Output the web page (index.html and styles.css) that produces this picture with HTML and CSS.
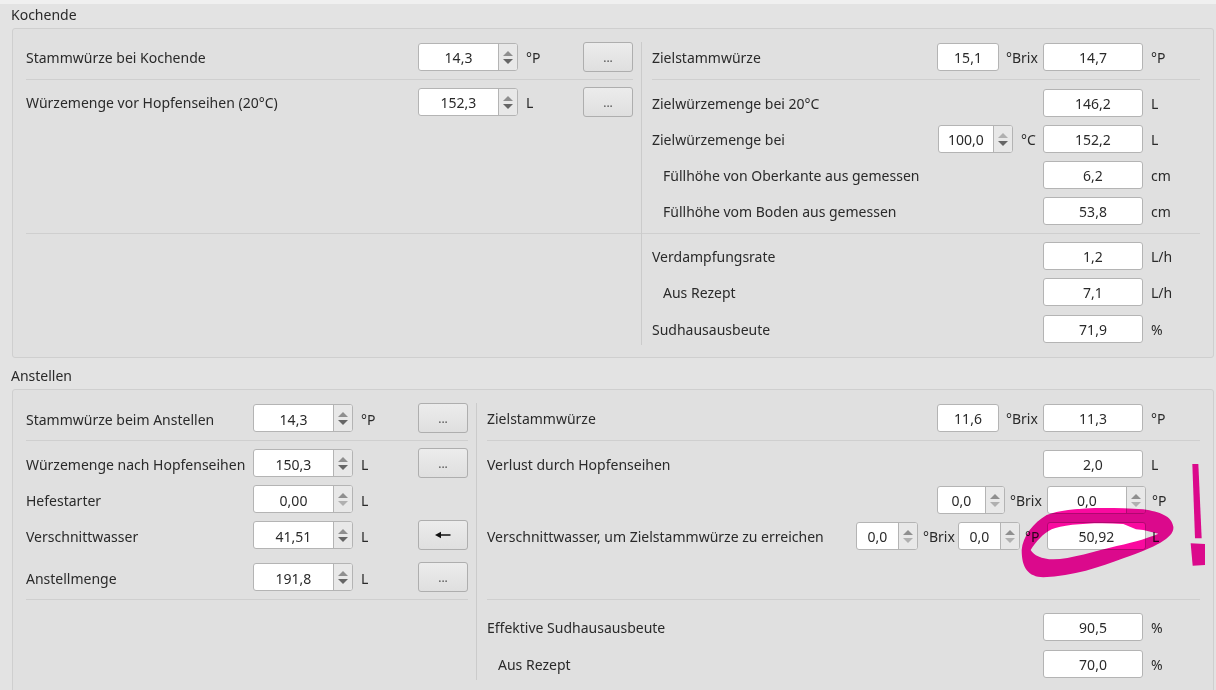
FILE: index.html
```html
<!DOCTYPE html>
<html lang="de">
<head>
<meta charset="utf-8">
<title>Kochende und Anstellen</title>
<link rel="stylesheet" href="styles.css">
</head>
<body>
<div class="topstrip"></div>
<h2 class="title t-koch">Kochende</h2>
<section class="panel koch">
  <div class="col lc1">
    <div class="row"><span class="label lw1">Stammwürze bei Kochende</span><div class="spin w100"><span class="val">14,3</span><span class="arrows"><i class="up"></i><i class="dn"></i></span></div><span class="unit u65">°P</span><button class="btn">...</button></div>
    <div class="hr h-a"></div>
    <div class="row"><span class="label lw1">Würzemenge vor Hopfenseihen (20°C)</span><div class="spin w100"><span class="val">152,3</span><span class="arrows"><i class="up"></i><i class="dn"></i></span></div><span class="unit u65">L</span><button class="btn">...</button></div>
    <div class="hr h-far"></div>
  </div>
  <div class="vline"></div>
  <div class="col rc1">
    <div class="row"><span class="label grow">Zielstammwürze</span><div class="field w62">15,1</div><span class="unit u44">°Brix</span><div class="field w100">14,7</div><span class="unit u57">°P</span></div>
    <div class="hr h-r"></div>
    <div class="row"><span class="label grow">Zielwürzemenge bei 20°C</span><div class="field w100">146,2</div><span class="unit u57">L</span></div>
    <div class="row gap"><span class="label grow">Zielwürzemenge bei</span><div class="spin w75"><span class="val">100,0</span><span class="arrows"><i class="up off"></i><i class="dn"></i></span></div><span class="unit u30">°C</span><div class="field w100">152,2</div><span class="unit u57">L</span></div>
    <div class="row gap"><span class="label grow ind">Füllhöhe von Oberkante aus gemessen</span><div class="field w100">6,2</div><span class="unit u57">cm</span></div>
    <div class="row gap"><span class="label grow ind">Füllhöhe vom Boden aus gemessen</span><div class="field w100">53,8</div><span class="unit u57">cm</span></div>
    <div class="hr h-b"></div>
    <div class="row"><span class="label grow">Verdampfungsrate</span><div class="field w100">1,2</div><span class="unit u57">L/h</span></div>
    <div class="row gap"><span class="label grow ind">Aus Rezept</span><div class="field w100">7,1</div><span class="unit u57">L/h</span></div>
    <div class="row gap1"><span class="label grow">Sudhausausbeute</span><div class="field w100">71,9</div><span class="unit u57">%</span></div>
  </div>
</section>

<h2 class="title t-anst">Anstellen</h2>
<section class="panel anst">
  <div class="col lc2">
    <div class="row"><span class="label lw2">Stammwürze beim Anstellen</span><div class="spin w100"><span class="val">14,3</span><span class="arrows"><i class="up"></i><i class="dn"></i></span></div><span class="unit u65">°P</span><button class="btn">...</button></div>
    <div class="hr h-a"></div>
    <div class="row"><span class="label lw2">Würzemenge nach Hopfenseihen</span><div class="spin w100"><span class="val">150,3</span><span class="arrows"><i class="up"></i><i class="dn"></i></span></div><span class="unit u65">L</span><button class="btn">...</button></div>
    <div class="row gap"><span class="label lw2">Hefestarter</span><div class="spin w100"><span class="val">0,00</span><span class="arrows"><i class="up"></i><i class="dn off"></i></span></div><span class="unit u65">L</span></div>
    <div class="row gap"><span class="label lw2">Verschnittwasser</span><div class="spin w100"><span class="val">41,51</span><span class="arrows"><i class="up"></i><i class="dn"></i></span></div><span class="unit u65">L</span><button class="btn"><svg class="arrow" width="16" height="8" viewBox="0 0 16 8"><path d="M0 4 L6 .8 V3.2 H15.5 V4.8 H6 V7.2 Z" fill="#111"/></svg></button></div>
    <div class="row gapl"><span class="label lw2">Anstellmenge</span><div class="spin w100"><span class="val">191,8</span><span class="arrows"><i class="up"></i><i class="dn"></i></span></div><span class="unit u65">L</span><button class="btn">...</button></div>
    <div class="hr h-c"></div>
  </div>
  <div class="vline"></div>
  <div class="col rc2">
    <div class="row"><span class="label grow">Zielstammwürze</span><div class="field w62">11,6</div><span class="unit u44">°Brix</span><div class="field w100">11,3</div><span class="unit u57">°P</span></div>
    <div class="hr h-r"></div>
    <div class="row"><span class="label grow">Verlust durch Hopfenseihen</span><div class="field w100">2,0</div><span class="unit u57">L</span></div>
    <div class="row gap"><span class="label grow"></span><div class="spin w68"><span class="val">0,0</span><span class="arrows"><i class="up"></i><i class="dn off"></i></span></div><span class="unit u41">°Brix</span><div class="spin w99"><span class="val">0,0</span><span class="arrows"><i class="up"></i><i class="dn off"></i></span></div><span class="unit u54">°P</span></div>
    <div class="row gap"><span class="label grow">Verschnittwasser, um Zielstammwürze zu erreichen</span><div class="spin w62"><span class="val">0,0</span><span class="arrows"><i class="up"></i><i class="dn off"></i></span></div><span class="unit u40">°Brix</span><div class="spin w62"><span class="val">0,0</span><span class="arrows"><i class="up"></i><i class="dn off"></i></span></div><span class="unit u26">°P</span><div class="field w99">50,92</div><span class="unit u54">L</span></div>
    <div class="hr h-d"></div>
    <div class="row"><span class="label grow">Effektive Sudhausausbeute</span><div class="field w100">90,5</div><span class="unit u57">%</span></div>
    <div class="row gap1"><span class="label grow ind">Aus Rezept</span><div class="field w100">70,0</div><span class="unit u57">%</span></div>
  </div>
</section>

<svg class="scribble" width="206" height="135" viewBox="0 -150 618 405" aria-hidden="true">
  <path fill-rule="evenodd" d="M35 150 C38 110 70 68 110 45 C170 22 280 20 400 28 C450 36 485 48 490 80 C494 112 440 140 340 175 C270 202 190 228 100 232 C55 230 35 205 35 150 Z M62 150 C78 125 100 100 125 88 C160 72 260 66 340 72 L378 88 L400 90 L445 101 C420 112 380 125 320 138 C260 152 180 178 130 178 C95 178 70 165 62 150 Z"/>
  <path d="M547 -108 L565 -108 L575 115 L555 115 Z"/>
  <path d="M542 130 L585 132 L585 195 L548 197 Z"/>
</svg>
</body>
</html>
```
FILE: styles.css
```css
* { box-sizing: border-box; }
html, body { margin: 0; height: 690px; overflow: hidden; }
body {
  position: relative;
  background: #e3e3e3;
  color: #2a2a2a;
  font-family: "Noto Sans", "Open Sans", sans-serif;
  font-size: 14px;
}
.topstrip { height: 4px; background: #f0f0f0; }
.title { margin: 0; padding-left: 11px; font-weight: 400; font-size: 14px; line-height: 20px; }
.t-koch { height: 24px; padding-top: 1px; }
.t-anst { height: 31px; padding-top: 8px; }
.panel {
  display: flex;
  margin: 0 2px 0 12px;
  border: 1px solid #cfcfcf;
  border-radius: 3px;
  background: #e0e0e0;
}
.koch { height: 330px; padding: 13px 0 0 13px; }
.anst { height: 320px; padding: 13px 0 0 13px; }
.col { display: flex; flex-direction: column; flex: none; }
.lc1 { width: 607px; }
.lc2 { width: 442px; }
.rc1 { width: 548px; }
.rc2 { width: 713px; }
.vline { flex: none; width: 1px; background: #cbcbcb; margin: 0 10px 0 8px; height: 303px; }
.anst .vline { height: 277px; }
.row { display: flex; align-items: center; height: 30px; flex: none; }
.gap { margin-top: 6px; }
.gap1 { margin-top: 7px; }
.gapl { margin-top: 12px; }
.label { white-space: nowrap; }
.grow { flex: 1; }
.ind { padding-left: 11px; }
.lw1 { width: 392px; }
.lw2 { width: 227px; padding-top: 2px; }
.lc2 .val, .lc2 .unit { padding-top: 2px; }
.hr { height: 1px; background: #cfcfcf; flex: none; }
.h-a { margin: 7px 0; }
.h-r { margin: 7px 0 8px; }
.h-b { margin: 7px 0; }
.h-c { margin: 7px 0 0; }
.h-d { margin: 48px 0 12px; }
.h-far { margin-top: 116px; width: 1174px; }
.field, .spin {
  height: 28px;
  background: #fff;
  border: 1px solid #b4b4b4;
  border-radius: 3px;
  flex: none;
}
.field { display: flex; align-items: center; justify-content: center; }
.spin { display: flex; }
.val { flex: 1; display: flex; align-items: center; justify-content: center; }
.arrows {
  width: 19px;
  display: flex;
  flex-direction: column;
  align-items: center;
  justify-content: center;
  gap: 3px;
  background: #e8e8e8;
  border-left: 1px solid #b4b4b4;
  border-radius: 0 2px 2px 0;
}
.up, .dn { display: block; width: 0; height: 0; border-left: 5px solid transparent; border-right: 5px solid transparent; }
.up { border-bottom: 5px solid #8f8f8f; }
.dn { border-top: 5px solid #666; }
.up.off { border-bottom-color: #b0b0b0; }
.dn.off { border-top-color: #b0b0b0; }
.w100 { width: 100px; }
.w99 { width: 99px; }
.w75 { width: 75px; }
.w68 { width: 68px; }
.w62 { width: 62px; }
.unit { flex: none; padding-left: 8px; white-space: nowrap; }
.u65 { width: 65px; }
.u57 { width: 57px; }
.u54 { width: 54px; padding-left: 6px; }
.u44 { width: 44px; padding-left: 7px; }
.u41 { width: 42px; padding-left: 5px; }
.u40 { width: 40px; padding-left: 5px; }
.u30 { width: 30px; }
.u26 { width: 27px; padding-left: 5px; }
.btn {
  width: 50px;
  height: 30px;
  padding: 0;
  flex: none;
  font: inherit;
  font-size: 12px;
  color: #555;
  background: linear-gradient(#ececec, #dfdfdf);
  border: 1px solid #aeaeae;
  border-radius: 3px;
}
.arrow { display: block; margin: 0 auto; }
.scribble { position: absolute; left: 1010px; top: 450px; fill: #fa0a9f; mix-blend-mode: multiply; }
```
